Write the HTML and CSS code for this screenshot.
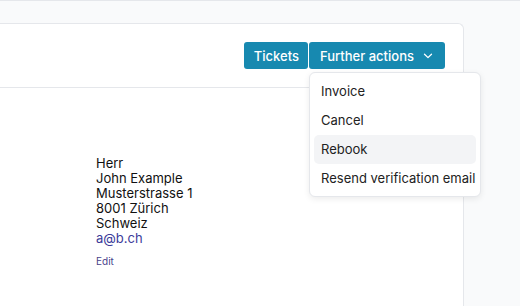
FILE: index.html
```html
<!DOCTYPE html>
<html lang="en">
<head>
    <meta charset="UTF-8">
    <title>Booking</title>
    <link rel="stylesheet" href="styles.css">
</head>
<body>
    <div class="page">
        <div class="card">
            <div class="card-header">
                <div class="actions">
                    <button class="btn">Tickets</button>
                    <div class="dropdown">
                        <button class="btn btn-toggle">Further actions
                            <svg class="chevron" width="10" height="6" viewBox="0 0 10 6"><path d="M1.5 1.2 5 4.6 8.5 1.2" fill="none" stroke="#fff" stroke-width="1.3" stroke-linecap="round" stroke-linejoin="round"/></svg>
                        </button>
                        <div class="menu">
                            <a class="menu-item">Invoice</a>
                            <a class="menu-item">Cancel</a>
                            <a class="menu-item active">Rebook</a>
                            <a class="menu-item">Resend verification email</a>
                        </div>
                    </div>
                </div>
            </div>
            <div class="card-body">
                <div class="address">
                    <div>Herr</div>
                    <div>John Example</div>
                    <div>Musterstrasse 1</div>
                    <div>8001 Zürich</div>
                    <div>Schweiz</div>
                    <a class="email">a@b.ch</a>
                </div>
                <a class="edit">Edit</a>
            </div>
        </div>
    </div>
</body>
</html>
```

FILE: styles.css
```css
body {
    margin: 0;
    background: #f9fafb;
    font-family: Inter, "Noto Sans", sans-serif;
    color: #1f2328;
    overflow: hidden;
}
.page {
    box-sizing: border-box;
    height: 100vh;
    border-top: 1px solid #e5e7eb;
    padding: 22px 56px 0 0;
}
.card {
    box-sizing: border-box;
    height: 100%;
    margin-left: -10px;
    background: #fff;
    border: 1px solid #e5e7eb;
    border-bottom: none;
    border-radius: 6px 6px 0 0;
}
.card-header {
    height: 63px;
    display: flex;
    justify-content: flex-end;
    align-items: center;
    padding-right: 18px;
    border-bottom: 1px solid #e5e7eb;
}
.actions {
    display: flex;
    gap: 1px;
}
.btn {
    font-family: inherit;
    font-size: 13px;
    font-weight: 500;
    color: #fff;
    background: #1789b0;
    border: none;
    border-radius: 3px;
    height: 27px;
    padding: 0 9px 0 10px;
    display: flex;
    align-items: center;
}
.btn-toggle {
    padding: 0 12px 0 11px;
    gap: 9px;
}
.chevron {
    margin-top: 1px;
}
.dropdown {
    position: relative;
}
.menu {
    position: absolute;
    top: 30px;
    left: 0;
    width: 162px;
    padding: 4px 4px 3px 4px;
    background: #fff;
    border: 1px solid #e5e7eb;
    border-radius: 6px;
    box-shadow: 0 2px 6px rgba(0, 0, 0, 0.08);
}
.menu-item {
    display: block;
    height: 29px;
    line-height: 29px;
    padding-left: 7px;
    font-size: 13px;
    color: #222;
    border-radius: 5px;
    white-space: nowrap;
}
.menu-item.active {
    background: #f3f4f6;
}
.card-body {
    padding: 68px 0 0 105px;
}
.address {
    font-size: 13px;
    line-height: 15px;
    color: #111;
}
.email {
    color: #3c3c9a;
}
.edit {
    display: block;
    margin-top: 9px;
    font-size: 10px;
    color: #4a3f8c;
}
```
